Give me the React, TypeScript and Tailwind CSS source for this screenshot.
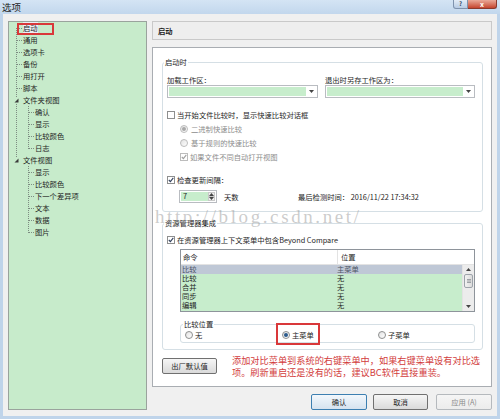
import React from "react";

type Seg = "full" | "top" | "bottom" | "none";
type CellDef = { v: Seg; h?: boolean; exp?: boolean };

const tree: { t: string; c: CellDef[]; sel?: boolean }[] = [
  { t: "启动", c: [{ v: "bottom", h: true }], sel: true },
  { t: "通用", c: [{ v: "full", h: true }] },
  { t: "选项卡", c: [{ v: "full", h: true }] },
  { t: "备份", c: [{ v: "full", h: true }] },
  { t: "用打开", c: [{ v: "full", h: true }] },
  { t: "脚本", c: [{ v: "full", h: true }] },
  { t: "文件夹视图", c: [{ v: "full", exp: true }] },
  { t: "确认", c: [{ v: "full" }, { v: "full", h: true }] },
  { t: "显示", c: [{ v: "full" }, { v: "full", h: true }] },
  { t: "比较颜色", c: [{ v: "full" }, { v: "full", h: true }] },
  { t: "日志", c: [{ v: "full" }, { v: "top", h: true }] },
  { t: "文件视图", c: [{ v: "top", exp: true }] },
  { t: "显示", c: [{ v: "none" }, { v: "full", h: true }] },
  { t: "比较颜色", c: [{ v: "none" }, { v: "full", h: true }] },
  { t: "下一个差异项", c: [{ v: "none" }, { v: "full", h: true }] },
  { t: "文本", c: [{ v: "none" }, { v: "full", h: true }] },
  { t: "数据", c: [{ v: "none" }, { v: "full", h: true }] },
  { t: "图片", c: [{ v: "none" }, { v: "top", h: true }] },
];

const rows = [
  { a: "比较", b: "主菜单" },
  { a: "比较", b: "无" },
  { a: "合并", b: "无" },
  { a: "同步", b: "无" },
  { a: "编辑", b: "无" },
];

function Cell({ v, h, exp }: CellDef) {
  const line = "#7d8c82";
  return (
    <svg width="12" height="12" className="shrink-0">
      {v !== "none" && !exp && (
        <line x1="6.5" x2="6.5" y1={v === "bottom" ? 6 : 0} y2={v === "top" ? 7 : 12} stroke={line} strokeDasharray="1 1" />
      )}
      {exp && <line x1="6.5" x2="6.5" y1="0" y2="3" stroke={line} strokeDasharray="1 1" />}
      {exp && v === "full" && <line x1="6.5" x2="6.5" y1="10" y2="12" stroke={line} strokeDasharray="1 1" />}
      {h && <line x1="7" x2="12" y1="6.5" y2="6.5" stroke={line} strokeDasharray="1 1" />}
      {exp && <path d="M8.5 4.5 L8.5 8.5 L4.5 8.5 Z" fill="#3c3c3c" />}
    </svg>
  );
}

function Box({ checked = false, disabled = false }: { checked?: boolean; disabled?: boolean }) {
  return (
    <span
      className={`flex h-[8px] w-[8px] shrink-0 items-center justify-center border bg-white ${
        disabled ? "border-[#bcbcbc]" : "border-[#8e8f8f]"
      }`}
    >
      {checked && (
        <svg width="6" height="6" viewBox="0 0 6 6">
          <path d="M0.8 3 L2.4 4.7 L5.3 0.9" fill="none" stroke={disabled ? "#a0a0a0" : "#34425e"} strokeWidth="1.1" />
        </svg>
      )}
    </span>
  );
}

function Radio({ checked = false, disabled = false }: { checked?: boolean; disabled?: boolean }) {
  return (
    <span
      className={`flex h-[8px] w-[8px] shrink-0 items-center justify-center rounded-full border bg-linear-to-br from-[#e2e2e2] to-white ${
        disabled ? "border-[#bcbcbc]" : "border-[#8e8f8f]"
      }`}
    >
      {checked && <span className={`h-[4px] w-[4px] rounded-full ${disabled ? "bg-[#a8a8a8]" : "bg-[#2b5a8c]"}`} />}
    </span>
  );
}

function Arrow({ up = false }: { up?: boolean }) {
  return (
    <svg width="5" height="3" viewBox="0 0 5 3">
      <path d={up ? "M0 3 L2.5 0 L5 3 Z" : "M0 0 L5 0 L2.5 3 Z"} fill="#444" />
    </svg>
  );
}

function Combo({ w }: { w: string }) {
  return (
    <div className={`flex h-[13px] border border-[#b9bcc1] bg-white p-[1px] ${w}`}>
      <div className="flex-1 bg-[#c7edcc]" />
      <div className="flex w-[10px] items-center justify-center">
        <Arrow />
      </div>
    </div>
  );
}

function Button({ label, primary = false, disabled = false, w = "w-[56px]" }: { label: string; primary?: boolean; disabled?: boolean; w?: string }) {
  const tone = disabled
    ? "border-[#b5b9bd] from-[#f5f5f5] to-[#ececec] text-[#8a8a8a]"
    : primary
      ? "border-[#3c7fb1] from-[#f2f7fc] to-[#d6e3ef]"
      : "border-[#707070] from-[#f6f6f6] to-[#dadada]";
  return (
    <div className={`flex h-[16px] items-center justify-center rounded-[2px] border bg-linear-to-b ${tone} ${w}`}>
      {label}
    </div>
  );
}

export default function App() {
  return (
    <div className="relative flex h-[419px] w-[500px] flex-col overflow-hidden bg-[#bfd4ea] font-['Noto_Sans_CJK_SC','Noto_Sans',sans-serif] text-[7.3px] leading-[10px] text-[#1e1e1e]">
      {/* Title bar */}
      <div className="flex h-[14px] shrink-0 items-start justify-between bg-linear-to-b from-[#d4e4f4] to-[#c2d7ed] pl-[2px] pr-[3px]">
        <span className="pt-[2px] text-[9.5px] leading-[10px]">选项</span>
        <div className="flex">
          <div className="flex h-[9px] w-[15px] items-center justify-center rounded-bl-[3px] border border-t-0 border-[#7f93ad] bg-linear-to-b from-[#e3ecf6] to-[#b8cce4] text-[6px] font-bold text-[#3b4c66]">
            ?
          </div>
          <div className="flex h-[9px] w-[29px] items-center justify-center rounded-br-[3px] border border-l-0 border-t-0 border-[#8a3a2e] bg-linear-to-b from-[#e9a898] to-[#c4442e] text-[7px] font-bold leading-none text-white">
            x
          </div>
        </div>
      </div>

      {/* Body */}
      <div className="mx-[3px] mb-[3px] flex flex-1 gap-[5px] bg-[#f0f0f0] pb-[6px] pl-[5px] pr-[5px] pt-[7px]">
        {/* Tree */}
        <div className="relative flex w-[139px] flex-col border border-[#9aa39d] bg-[#c7ebcb] pl-[1px]">
          {tree.map((n, i) => (
            <div key={i} className="flex h-[12px] items-center">
              {n.c.map((c, j) => (
                <Cell key={j} {...c} />
              ))}
              <span className={`ml-[1px] leading-[12px] ${n.sel ? "bg-[#eaeef5]" : ""}`}>{n.t}</span>
            </div>
          ))}
          <div className="pointer-events-none absolute left-[8px] top-[1px] h-[12px] w-[37px] border-2 border-[#d9383a]" />
        </div>

        {/* Right column */}
        <div className="flex w-[340px] flex-col">
          <div className="flex h-[19px] items-center border border-[#c9c9c9] bg-[#eeeeee] pl-[5px] font-bold">启动</div>

          <div className="relative mt-[7px] flex h-[340px] flex-col border border-[#a9adb2] bg-white pl-[9px] pr-[8px] pt-[9px]">
            {/* 启动时 */}
            <fieldset className="rounded-[3px] border border-[#d5dfe5] px-[4px] pb-[8px]">
              <legend className="-ml-[3px] px-[1px] leading-[10px]">启动时</legend>
              <div className="mt-[8px] flex h-[10px]">
                <div className="w-[151px]">加载工作区：</div>
                <div className="ml-[7px]">退出时另存工作区为：</div>
              </div>
              <div className="flex">
                <Combo w="w-[151px]" />
                <div className="ml-[7px]">
                  <Combo w="w-[150px]" />
                </div>
              </div>
              <div className="mt-[10px] flex h-[14px] items-center gap-[2px]">
                <Box />
                <span>当开始文件比较时，显示快速比较对话框</span>
              </div>
              <div className="ml-[13px] flex h-[14px] items-center gap-[3px] text-[#8d8d8d]">
                <Radio checked disabled />
                <span>二进制快速比较</span>
              </div>
              <div className="ml-[13px] flex h-[14px] items-center gap-[3px] text-[#8d8d8d]">
                <Radio disabled />
                <span>基于规则的快速比较</span>
              </div>
              <div className="ml-[13px] flex h-[14px] items-center gap-[2px] text-[#8d8d8d]">
                <Box checked disabled />
                <span>如果文件不同自动打开视图</span>
              </div>
              <div className="mt-[9px] flex h-[14px] items-center gap-[2px]">
                <Box checked />
                <span>检查更新间隔：</span>
              </div>
              <div className="mt-[3px] flex h-[13px] items-center">
                <div className="ml-[12px] flex h-[13px] w-[38px] border border-[#b9bcc1] bg-white p-[1px]">
                  <div className="flex-1 bg-[#c7edcc] pl-[2px] leading-[9px]">7</div>
                  <div className="flex w-[7px] flex-col">
                    <div className="flex flex-1 items-center justify-center border border-[#c9c9c9] bg-[#efefef]">
                      <Arrow up />
                    </div>
                    <div className="flex flex-1 items-center justify-center border border-t-0 border-[#c9c9c9] bg-[#efefef]">
                      <Arrow />
                    </div>
                  </div>
                </div>
                <span className="ml-[7px] w-[74px]">天数</span>
                <span>最后检测时间： 2016/11/22 17:34:32</span>
              </div>
            </fieldset>

            {/* 资源管理器集成 */}
            <fieldset className="mt-[6px] rounded-[3px] border border-[#d5dfe5] px-[4px] pb-[6px]">
              <legend className="-ml-[3px] px-[1px] leading-[10px]">资源管理器集成</legend>
              <div className="mt-[5px] flex h-[14px] items-center gap-[2px]">
                <Box checked />
                <span>在资源管理器上下文菜单中包含Beyond Compare</span>
              </div>
              <div className="ml-[13px] mt-[2px] flex h-[63px] w-[295px] flex-col border border-[#8e949b] bg-white">
                <div className="flex h-[15px] shrink-0 border-b border-[#e3e3e3] leading-[14px]">
                  <div className="w-[157px] border-r border-[#e3e3e3] pl-[2px]">命令</div>
                  <div className="pl-[3px]">位置</div>
                </div>
                <div className="flex flex-1">
                  <div className="flex flex-1 flex-col bg-[#c7edcc]">
                    {rows.map((r, i) => (
                      <div key={i} className={`flex h-[9px] leading-[9px] ${i === 0 ? "bg-[#bfc8d6] text-[#4d5566]" : ""}`}>
                        <span className="w-[156px] pl-[1px]">{r.a}</span>
                        <span>{r.b}</span>
                      </div>
                    ))}
                  </div>
                  <div className="flex w-[12px] flex-col border-l border-[#e3e3e3] bg-[#ececec]">
                    <div className="flex h-[9px] items-center justify-center">
                      <Arrow up />
                    </div>
                    <div className="mx-[1px] flex h-[14px] items-center justify-center rounded-[2px] border border-[#9da3aa] bg-linear-to-r from-[#f2f2f2] to-[#dcdcdc]">
                      <svg width="4" height="4" viewBox="0 0 4 4">
                        <path d="M0 0.5 H4 M0 2 H4 M0 3.5 H4" stroke="#8a8f96" strokeWidth="0.8" />
                      </svg>
                    </div>
                    <div className="flex-1" />
                    <div className="flex h-[9px] items-center justify-center">
                      <Arrow />
                    </div>
                  </div>
                </div>
              </div>
              <fieldset className="ml-[13px] mt-[7px] w-[295px] rounded-[3px] border border-[#d5dfe5] px-[4px] pb-[1px]">
                <legend className="-ml-[2px] px-[1px] leading-[10px]">比较位置</legend>
                <div className="flex h-[12px] items-center">
                  <div className="flex w-[97px] items-center gap-[2px]">
                    <Radio />
                    <span>无</span>
                  </div>
                  <div className="flex w-[96px] items-center gap-[2px]">
                    <Radio checked />
                    <span>主菜单</span>
                  </div>
                  <div className="flex items-center gap-[2px]">
                    <Radio />
                    <span>子菜单</span>
                  </div>
                </div>
              </fieldset>
            </fieldset>

            <div className="mt-[4px] flex items-start">
              <div className="mt-[4px]">
                <Button label="出厂默认值" w="w-[55px]" />
              </div>
              <div className="ml-[15px] whitespace-nowrap text-[9.2px] leading-[12px] text-[#d23c3c]">
                添加对比菜单到系统的右键菜单中，如果右键菜单设有对比选
                <br />
                项。刷新重启还是没有的话，建议BC软件直接重装。
              </div>
            </div>

            <div className="pointer-events-none absolute left-[123px] top-[275px] h-[22px] w-[44px] border-2 border-[#d9383a]" />
          </div>

          <div className="mt-[7px] flex justify-end">
            <Button label="确认" primary />
            <div className="ml-[6px]">
              <Button label="取消" w="w-[55px]" />
            </div>
            <div className="ml-[8px]">
              <Button label="应用 (A)" disabled />
            </div>
          </div>
        </div>
      </div>

      <div className="pointer-events-none absolute left-[155px] top-[207px] font-['Liberation_Serif',serif] text-[19px] leading-[19px] tracking-[2.6px] text-[#9a9a9a]/50">
        http://blog.csdn.net/
      </div>
    </div>
  );
}
